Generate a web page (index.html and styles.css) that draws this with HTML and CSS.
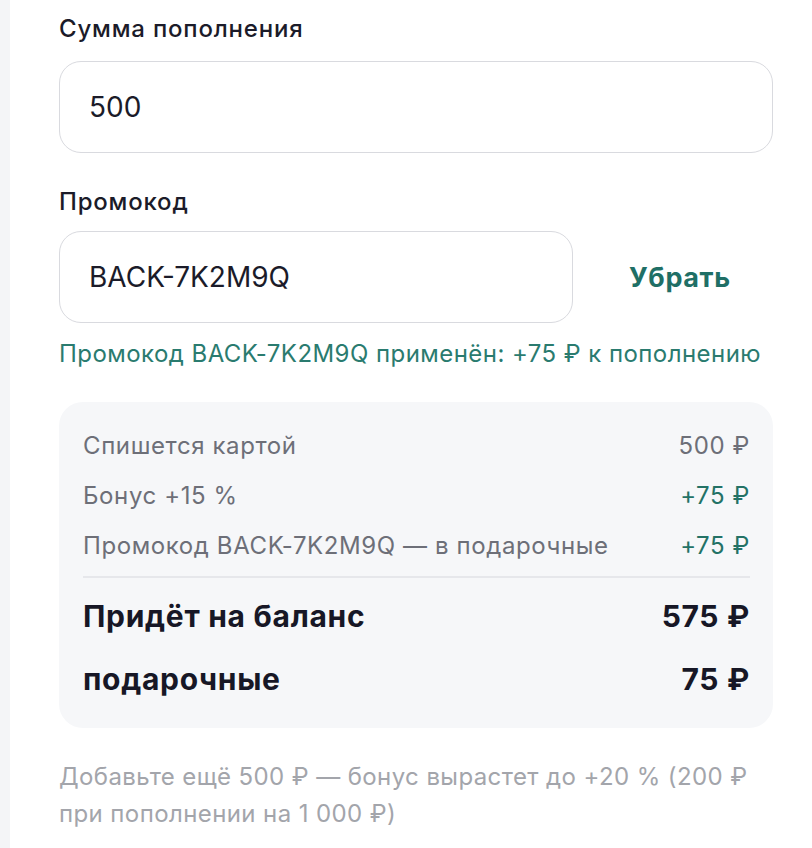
FILE: index.html
```html
<!DOCTYPE html>
<html lang="ru">
<head>
    <meta charset="UTF-8">
    <meta name="viewport" content="width=device-width, initial-scale=1.0">
    <title>Пополнение баланса</title>
    <link rel="stylesheet" href="styles.css">
</head>
<body>

    <div class="side"></div>

    <main class="topup">
        <label class="field-label" for="amount">Сумма пополнения</label>
        <input class="field-input" id="amount" type="text" value="500">

        <label class="field-label promo-label" for="promo">Промокод</label>
        <div class="promo-row">
            <input class="field-input promo-input" id="promo" type="text" value="BACK-7K2M9Q">
            <button class="promo-remove" type="button">Убрать</button>
        </div>
        <p class="promo-note">Промокод BACK-7K2M9Q применён: +75&nbsp;₽ к&nbsp;пополнению</p>

        <!-- Summary -->
        <div class="summary">
            <div class="summary-row">
                <span>Спишется картой</span>
                <span>500&nbsp;₽</span>
            </div>
            <div class="summary-row">
                <span>Бонус +15&nbsp;%</span>
                <span class="plus">+75&nbsp;₽</span>
            </div>
            <div class="summary-row">
                <span>Промокод BACK-7K2M9Q — в подарочные</span>
                <span class="plus">+75&nbsp;₽</span>
            </div>
            <div class="summary-total">
                <div class="total-row">
                    <span>Придёт на баланс</span>
                    <span>575&nbsp;₽</span>
                </div>
                <div class="total-row">
                    <span>подарочные</span>
                    <span>75&nbsp;₽</span>
                </div>
            </div>
        </div>

        <p class="hint">Добавьте ещё 500&nbsp;₽ — бонус вырастет до +20&nbsp;% (200&nbsp;₽ при пополнении на 1&nbsp;000&nbsp;₽)</p>
    </main>

</body>
</html>
```

FILE: styles.css
```css
/* Reset and Base Styles */
* {
    margin: 0;
    padding: 0;
    box-sizing: border-box;
}

body {
    display: flex;
    min-height: 100vh;
    background-color: #fff;
    font-family: Inter, "Noto Sans", sans-serif;
    color: #1b1b29;
    overflow: hidden;
}

.side {
    width: 10px;
    flex-shrink: 0;
    background-color: #f4f5f7;
}

.topup {
    flex: 1;
    display: flex;
    flex-direction: column;
    padding: 13px 39px 0 49px;
    letter-spacing: 0.6px;
}

/* Fields */
.field-label {
    font-size: 24px;
    line-height: 32px;
    font-weight: 500;
    letter-spacing: 0.8px;
    margin-bottom: 16px;
}

.promo-label {
    margin-top: 33px;
    margin-bottom: 13px;
}

.field-input {
    width: 100%;
    height: 92px;
    padding: 0 29px;
    border: 1px solid #d9dadf;
    border-radius: 22px;
    background: #fff;
    font-family: inherit;
    font-size: 28px;
    letter-spacing: 0;
    color: #1b1b29;
    outline: none;
}

.promo-row {
    display: flex;
    align-items: center;
}

.promo-input {
    width: 514px;
    flex-shrink: 0;
}

.promo-remove {
    margin-left: 56px;
    border: none;
    background: none;
    font-family: inherit;
    font-size: 27px;
    font-weight: 700;
    letter-spacing: 0.6px;
    color: #1f6f66;
    cursor: pointer;
}

.promo-note {
    margin-top: 15px;
    font-size: 24px;
    line-height: 32px;
    letter-spacing: 0.45px;
    color: #2a7b6f;
    white-space: nowrap;
}

/* Summary */
.summary {
    margin-top: 32px;
    padding: 28px 23px 29px 24px;
    border-radius: 24px;
    background-color: #f6f7f9;
}

.summary-row {
    display: flex;
    justify-content: space-between;
    font-size: 24px;
    line-height: 32px;
    color: #6d6f78;
}

.summary-row + .summary-row {
    margin-top: 18px;
}

.summary-row .plus {
    color: #237266;
}

.summary-total {
    margin-top: 14px;
    padding-top: 18px;
    border-top: 2px solid #e6e7eb;
}

.total-row {
    display: flex;
    justify-content: space-between;
    font-size: 30px;
    line-height: 40px;
    font-weight: 700;
    letter-spacing: 0.7px;
    color: #171726;
}

.total-row + .total-row {
    margin-top: 23px;
}

.hint {
    margin-top: 30px;
    font-size: 24px;
    line-height: 37px;
    letter-spacing: 0.4px;
    color: #a3a5ab;
}
```
